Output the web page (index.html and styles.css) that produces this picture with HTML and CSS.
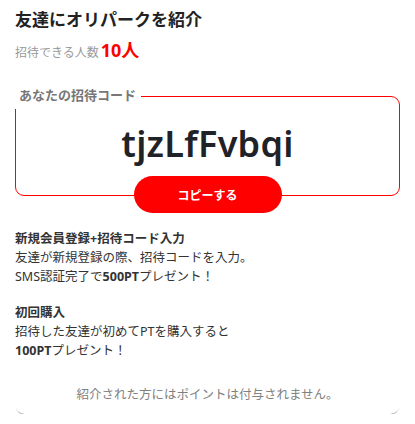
FILE: index.html
```html
<!DOCTYPE html>
<html lang="ja">
<head>
<meta charset="utf-8">
<link rel="stylesheet" href="styles.css">
</head>
<body>
<div class="page">
  <h1 class="title">友達にオリパークを紹介</h1>
  <div class="count"><span class="count-label">招待できる人数</span><span class="count-num">10人</span></div>

  <div class="code-box">
    <div class="code-label">あなたの招待コード</div>
    <div class="code">tjzLfFvbqi</div>
    <button class="copy-btn">コピーする</button>
  </div>

  <div class="info">
    <div class="info-block">
      <p class="info-head">新規会員登録+招待コード入力</p>
      <p>友達が新規登録の際、招待コードを入力。</p>
      <p>SMS認証完了で<b>500PT</b>プレゼント！</p>
    </div>
    <div class="info-block">
      <p class="info-head">初回購入</p>
      <p>招待した友達が初めてPTを購入すると</p>
      <p><b>100PT</b>プレゼント！</p>
    </div>
  </div>

  <div class="note">紹介された方にはポイントは付与されません。</div>
</div>
</body>
</html>
```
FILE: styles.css
```css
* { box-sizing: border-box; }
html, body { margin: 0; padding: 0; background: #fff; }
body {
  font-family: "Noto Sans", "Noto Sans CJK JP", sans-serif;
  color: #333;
}
.page {
  padding: 8px 15px 0;
  display: flex;
  flex-direction: column;
}
.title {
  margin: 0;
  font-size: 17px;
  font-weight: 700;
  line-height: 24px;
  color: #222;
}
.count {
  display: flex;
  align-items: baseline;
  margin-top: 4px;
  height: 26px;
}
.count-label {
  font-size: 12px;
  color: #999;
}
.count-num {
  font-size: 18px;
  font-weight: 700;
  color: #f00;
  margin-left: 2px;
}
.code-box {
  position: relative;
  margin-top: 34px;
  border: 1px solid #f00;
  border-radius: 9px;
  height: 100px;
  display: flex;
  flex-direction: column;
  align-items: center;
}
.code-label {
  position: absolute;
  left: -2px;
  top: -12px;
  background: #fff;
  padding: 0 5px 4px 5px;
  font-size: 13px;
  font-weight: 700;
  line-height: 20px;
  color: #777;
}
.code {
  margin-top: 25px;
  font-family: "Noto Sans", sans-serif;
  font-size: 36px;
  font-weight: 600;
  line-height: 44px;
  color: #1f2328;
  letter-spacing: 0.3px;
}
.copy-btn {
  position: absolute;
  left: 50%;
  bottom: -18px;
  transform: translateX(-50%);
  width: 148px;
  height: 37px;
  border: none;
  border-radius: 19px;
  background: #f00;
  color: #fff;
  font-family: "Noto Sans CJK JP", sans-serif;
  font-size: 12px;
  font-weight: 700;
}
.info {
  margin-top: 33px;
  display: flex;
  flex-direction: column;
  gap: 17px;
}
.info p {
  margin: 0;
  font-size: 12.5px;
  line-height: 19px;
  color: #333;
}
.info p.info-head { font-weight: 700; }
.info b { font-weight: 700; }
.note {
  margin-top: 12px;
  height: 42px;
  display: flex;
  align-items: center;
  justify-content: center;
  font-size: 12.5px;
  color: #808080;
  border-radius: 0 0 10px 10px;
  box-shadow: 0 2px 1px -1px rgba(0,0,0,0.35);
}
```
